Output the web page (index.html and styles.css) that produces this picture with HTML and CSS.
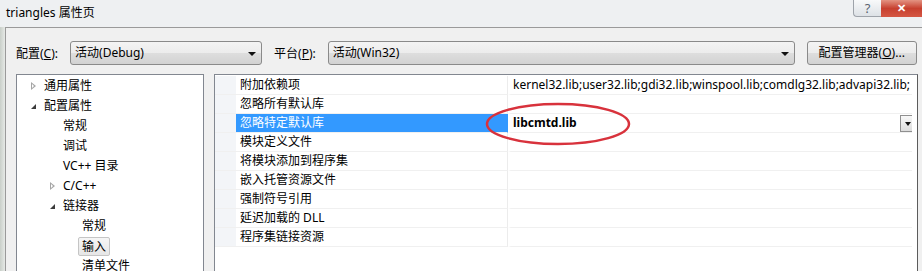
FILE: index.html
```html
<!DOCTYPE html>
<html lang="zh-CN">
<head>
  <meta charset="UTF-8">
  <title>triangles 属性页</title>
  <link rel="stylesheet" href="styles.css">
</head>
<body>
  <div class="window">
    <div class="titlebar">
      <span class="title">triangles 属性页</span>
      <div class="caption-btns">
        <span class="cap-help">?</span>
        <span class="cap-close">&#x2715;</span>
      </div>
    </div>

    <div class="frame">
      <div class="toolbar">
        <span class="label">配置(<u>C</u>):</span>
        <div class="combo combo-config">活动(Debug)<span class="arrow"></span></div>
        <span class="label">平台(<u>P</u>):</span>
        <div class="combo combo-platform">活动(Win32)<span class="arrow"></span></div>
        <div class="btn">配置管理器(<u>O</u>)...</div>
      </div>

      <div class="panels">
        <ul class="tree">
          <li class="lvl0"><span class="tw closed"></span>通用属性</li>
          <li class="lvl0"><span class="tw open"></span>配置属性</li>
          <li class="lvl1"><span class="tw"></span>常规</li>
          <li class="lvl1"><span class="tw"></span>调试</li>
          <li class="lvl1"><span class="tw"></span>VC++ 目录</li>
          <li class="lvl1"><span class="tw closed"></span>C/C++</li>
          <li class="lvl1"><span class="tw open"></span>链接器</li>
          <li class="lvl2"><span class="tw"></span>常规</li>
          <li class="lvl2"><span class="tw"></span><span class="sel">输入</span></li>
          <li class="lvl2"><span class="tw"></span>清单文件</li>
        </ul>

        <div class="props">
          <div class="row"><span class="gut"></span><span class="name">附加依赖项</span><span class="val">kernel32.lib;user32.lib;gdi32.lib;winspool.lib;comdlg32.lib;advapi32.lib;</span></div>
          <div class="row"><span class="gut"></span><span class="name">忽略所有默认库</span><span class="val"></span></div>
          <div class="row active"><span class="gut"></span><span class="name">忽略特定默认库</span><span class="val"><b>libcmtd.lib</b><span class="drop"></span></span></div>
          <div class="row"><span class="gut"></span><span class="name">模块定义文件</span><span class="val"></span></div>
          <div class="row"><span class="gut"></span><span class="name">将模块添加到程序集</span><span class="val"></span></div>
          <div class="row"><span class="gut"></span><span class="name">嵌入托管资源文件</span><span class="val"></span></div>
          <div class="row"><span class="gut"></span><span class="name">强制符号引用</span><span class="val"></span></div>
          <div class="row"><span class="gut"></span><span class="name">延迟加载的 DLL</span><span class="val"></span></div>
          <div class="row"><span class="gut"></span><span class="name">程序集链接资源</span><span class="val"></span></div>

          <svg class="mark" width="150" height="48" viewBox="0 0 150 48">
            <ellipse cx="74" cy="23" rx="71" ry="20" fill="none" stroke="#d8323c" stroke-width="2.5"/>
          </svg>
        </div>
      </div>
    </div>
  </div>
</body>
</html>
```

FILE: styles.css
```css
html, body {
  margin: 0;
  padding: 0;
}
body {
  width: 922px;
  height: 271px;
  overflow: hidden;
  background: #f0f0f0;
  font-family: "Noto Sans", "Noto Sans CJK SC", sans-serif;
  font-size: 12px;
  color: #000;
}
.window {
  height: 271px;
  background: linear-gradient(to right, #c9cfc9 0, #e6e9e6 5px, #f0f0f0 5px);
}

/* title bar */
.titlebar {
  height: 27px;
  display: flex;
  align-items: flex-start;
  background: #eef0f2;
}
.title {
  margin: 5px 0 0 6px;
  line-height: 16px;
}
.caption-btns {
  margin-left: auto;
  display: flex;
}
.cap-help, .cap-close {
  height: 17px;
  line-height: 16px;
  text-align: center;
  box-sizing: border-box;
}
.cap-help {
  width: 28px;
  border: 1px solid #9ea3aa;
  border-top: none;
  border-right: none;
  border-radius: 0 0 0 4px;
  background: linear-gradient(#f8f9fa, #dde1e6);
  color: #5a6370;
  font-size: 13px;
}
.cap-close {
  width: 41px;
  background: linear-gradient(#e39382, #c7402f 50%, #d45744);
  color: #fff;
  font-weight: bold;
  font-size: 11px;
}

/* dialog frame */
.frame {
  margin-left: 5px;
  height: 244px;
  border-top: 1px solid #9a9a9a;
  border-left: 1px solid #9a9a9a;
  background: #f0f0f0;
}
.toolbar {
  display: flex;
  align-items: center;
  height: 24px;
  padding: 13px 0 0 10px;
}
.label {
  margin-right: 12px;
}
.combo {
  position: relative;
  height: 24px;
  line-height: 22px;
  box-sizing: border-box;
  padding-left: 4px;
  border: 1px solid #8a8a8a;
  border-radius: 3px;
  background: linear-gradient(#f4f4f4, #ececec 50%, #dedede 50%, #d2d2d2);
  margin-right: 12px;
}
.combo-config { width: 192px; }
.combo-platform { width: 467px; }
.arrow {
  position: absolute;
  right: 5px;
  top: 10px;
  border-left: 4px solid transparent;
  border-right: 4px solid transparent;
  border-top: 4px solid #111;
}
.btn {
  width: 110px;
  height: 24px;
  line-height: 22px;
  box-sizing: border-box;
  text-align: center;
  border: 1px solid #8a8a8a;
  border-radius: 3px;
  background: linear-gradient(#f4f4f4, #ececec 50%, #dedede 50%, #d2d2d2);
}

.panels {
  display: flex;
  margin-top: 9px;
  padding-left: 10px;
}

/* tree */
.tree {
  list-style: none;
  margin: 0;
  padding: 1px 0 0;
  width: 188px;
  height: 200px;
  box-sizing: border-box;
  background: #fff;
  border: 1px solid #828790;
  margin-right: 10px;
}
.tree li {
  height: 20px;
  line-height: 20px;
  display: flex;
  align-items: center;
  white-space: nowrap;
}
.lvl0 { padding-left: 11px; }
.lvl1 { padding-left: 30px; }
.lvl2 { padding-left: 49px; }
.tw {
  width: 16px;
  height: 20px;
  position: relative;
  flex: none;
}
.tw.closed::before {
  content: "";
  position: absolute;
  left: 3px;
  top: 6px;
  border-top: 4px solid transparent;
  border-bottom: 4px solid transparent;
  border-left: 5px solid #a6a6a6;
}
.tw.closed::after {
  content: "";
  position: absolute;
  left: 4px;
  top: 8px;
  border-top: 2px solid transparent;
  border-bottom: 2px solid transparent;
  border-left: 2.5px solid #fff;
}
.tw.open::before {
  content: "";
  position: absolute;
  left: 3px;
  top: 8px;
  border-left: 5px solid transparent;
  border-bottom: 5px solid #3c3c3c;
}
.sel {
  margin-left: -4px;
  padding: 0 3px;
  line-height: 17px;
  border: 1px solid #c5c5c5;
  border-radius: 2px;
  background: linear-gradient(#f6f6f6, #e6e6e6);
}

/* property grid */
.props {
  position: relative;
  width: 704px;
  height: 200px;
  box-sizing: border-box;
  padding-top: 1px;
  background: #fff;
  border: 1px solid #828790;
  border-right-color: #5c5c5c;
}
.row {
  display: grid;
  grid-template-columns: 21px 272px 1fr;
  height: 19px;
  margin-right: 5px;
}
.row span {
  box-sizing: border-box;
  line-height: 18px;
  border-bottom: 1px solid #f0f0f0;
}
.gut {
  background: #f3f5f8;
}
.name {
  padding-left: 4px;
  border-right: 1px solid #ececec;
  white-space: nowrap;
}
.val {
  position: relative;
  padding-left: 2px;
  border-left: 3px solid #fff;
  white-space: nowrap;
  overflow: hidden;
}
.row.active .name {
  background: #3399ff;
  color: #fff;
  border-right-color: #3399ff;
}
.drop {
  position: absolute;
  right: -4px;
  top: 1px;
  width: 16px;
  height: 17px;
  box-sizing: border-box;
  border: 1px solid #8f8f8f !important;
  background: linear-gradient(#f8f8f8, #dcdcdc);
}
.drop::after {
  content: "";
  position: absolute;
  left: 4px;
  top: 6px;
  border-left: 3.5px solid transparent;
  border-right: 3.5px solid transparent;
  border-top: 4px solid #111;
}
.mark {
  position: absolute;
  left: 269px;
  top: 26px;
}
```
